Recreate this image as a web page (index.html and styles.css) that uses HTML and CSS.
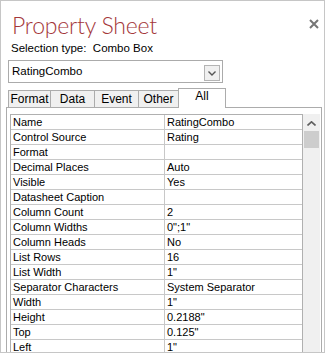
FILE: index.html
```html
<!DOCTYPE html>
<html lang="en">
<head>
  <meta charset="UTF-8">
  <title>Property Sheet</title>
  <link rel="stylesheet" href="styles.css">
</head>
<body>
  <div class="sheet">
    <div class="header">
      <h1>Property Sheet</h1>
      <svg class="close" width="10" height="10" viewBox="0 0 10 10">
        <path d="M1 1 L9 9 M9 1 L1 9" stroke="#767676" stroke-width="2"/>
      </svg>
    </div>
    <div class="seltype">Selection type:&nbsp; Combo Box</div>

    <div class="combo">
      <span class="combo-text">RatingCombo</span>
      <span class="combo-btn">
        <svg width="8" height="5" viewBox="0 0 8 5"><path d="M0.5 0.5 L4 4 L7.5 0.5" stroke="#555" stroke-width="1.4" fill="none"/></svg>
      </span>
    </div>

    <div class="tabs">
      <div class="tab">Format</div>
      <div class="tab">Data</div>
      <div class="tab">Event</div>
      <div class="tab">Other</div>
      <div class="tab active">All</div>
    </div>

    <div class="panel">
      <div class="grid" id="grid"></div>
      <div class="scrollbar">
        <svg class="arrow" width="9" height="5" viewBox="0 0 9 5"><path d="M0.5 4.5 L4.5 0.8 L8.5 4.5" stroke="#606060" stroke-width="1.6" fill="none"/></svg>
        <div class="thumb"></div>
      </div>
    </div>
  </div>

  <script>
const props = [
  ['Name', 'RatingCombo'],
  ['Control Source', 'Rating'],
  ['Format', ''],
  ['Decimal Places', 'Auto'],
  ['Visible', 'Yes'],
  ['Datasheet Caption', ''],
  ['Column Count', '2'],
  ['Column Widths', '0";1"'],
  ['Column Heads', 'No'],
  ['List Rows', '16'],
  ['List Width', '1"'],
  ['Separator Characters', 'System Separator'],
  ['Width', '1"'],
  ['Height', '0.2188"'],
  ['Top', '0.125"'],
  ['Left', '1"']
];

const grid = document.getElementById('grid');
props.forEach(p => {
  const name = document.createElement('div');
  name.className = 'cell name';
  name.textContent = p[0];
  const value = document.createElement('div');
  value.className = 'cell value';
  value.textContent = p[1];
  grid.appendChild(name);
  grid.appendChild(value);
});
</script>
</body>
</html>
```

FILE: styles.css
```css
body {
  margin: 0;
  background: #fff;
  font-family: 'Liberation Sans', Arial, sans-serif;
  color: #000;
}
.sheet {
  width: 325px;
  height: 353px;
  box-sizing: border-box;
  border: 1px solid #c6c6c6;
  overflow: hidden;
  background: #fff;
}
.header {
  display: flex;
  justify-content: space-between;
  align-items: flex-start;
  padding: 11px 5px 0 11px;
  height: 28px;
}
h1 {
  margin: 0;
  font-family: 'Lato', 'Liberation Sans', sans-serif;
  font-weight: 300;
  font-size: 23px;
  line-height: 26px;
  color: #a4373a;
  letter-spacing: -0.2px;
}
.close {
  margin-top: 7px;
}
.seltype {
  font-size: 11.5px;
  line-height: 14px;
  padding-left: 10px;
  margin-top: 1px;
}
.combo {
  margin: 5px 0 0 7px;
  width: 215px;
  height: 23px;
  box-sizing: border-box;
  border: 1px solid #ababab;
  display: flex;
  align-items: flex-end;
  justify-content: space-between;
  padding: 0 2px 1px 3px;
}
.combo-text {
  font-size: 11.5px;
  align-self: center;
}
.combo-btn {
  width: 16px;
  height: 16px;
  box-sizing: border-box;
  border: 1px solid #b4b4b4;
  background: #f0f0f0;
  display: flex;
  align-items: center;
  justify-content: center;
}
.tabs {
  display: flex;
  align-items: flex-end;
  margin: 5px 0 0 7px;
  height: 19px;
  position: relative;
  z-index: 1;
}
.tab {
  height: 17px;
  box-sizing: border-box;
  border: 1px solid #acacac;
  border-bottom: none;
  background: #f0f0f0;
  font-size: 12px;
  line-height: 16px;
  padding: 0 1px;
  margin-right: -1px;
  text-align: center;
}
.tab:nth-child(1) { width: 43px; }
.tab:nth-child(2) { width: 45px; }
.tab:nth-child(3) { width: 45px; }
.tab:nth-child(4) { width: 41px; }
.tab.active {
  width: 48px;
  height: 20px;
  background: #fff;
  line-height: 14px;
  margin-bottom: -1px;
}
.panel {
  margin-left: 5px;
  width: 316px;
  height: 260px;
  box-sizing: border-box;
  border: 1px solid #acacac;
  display: flex;
  align-items: flex-start;
  padding: 6px 1px 0 3px;
}
.grid {
  display: grid;
  grid-template-columns: 153px 137px;
  column-gap: 1px;
  row-gap: 1px;
  background: #c8c8c8;
  border: 1px solid #b0b0b0;
}
.cell {
  background: #fff;
  height: 14px;
  font-size: 11px;
  line-height: 14px;
  padding-left: 2px;
  white-space: nowrap;
  overflow: hidden;
}
.scrollbar {
  width: 17px;
  height: 240px;
  background: #f0f0f0;
  display: flex;
  flex-direction: column;
  align-items: center;
}
.arrow {
  margin-top: 7px;
}
.thumb {
  margin-top: 5px;
  width: 15px;
  height: 17px;
  background: #cdcdcd;
}
```
